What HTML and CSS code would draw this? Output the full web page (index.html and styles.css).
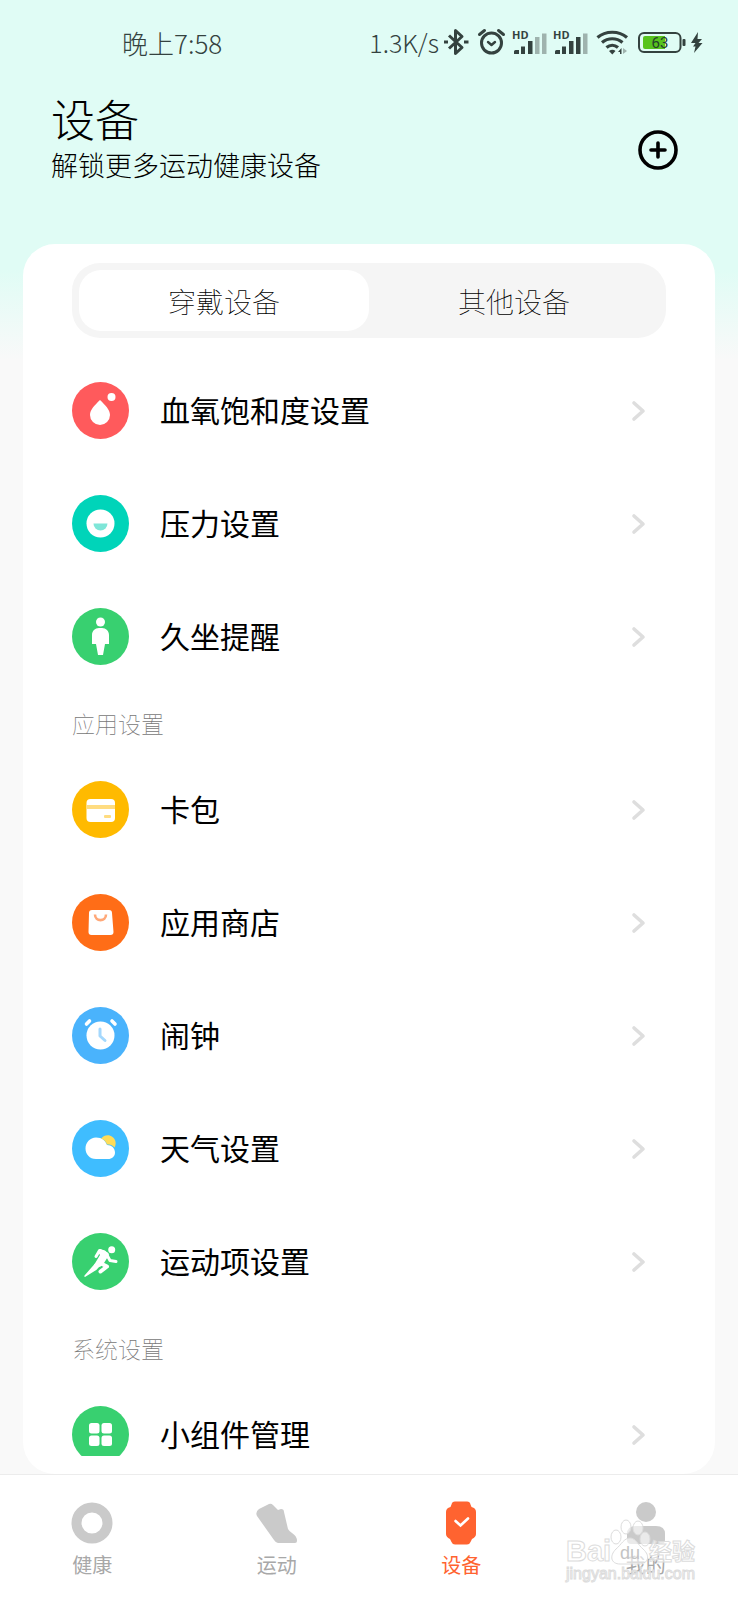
FILE: index.html
```html
<!DOCTYPE html>
<html lang="zh-CN">
<head>
    <meta charset="UTF-8">
    <meta name="viewport" content="width=device-width, initial-scale=1.0">
    <title>设备</title>
    <link rel="stylesheet" href="styles.css">
</head>
<body>

<svg class="defs" aria-hidden="true">
    <symbol id="chevron" viewBox="0 0 16 24">
        <path d="M4 4l9 8-9 8" fill="none" stroke="#dedede" stroke-width="3.600" stroke-linecap="round" stroke-linejoin="round"/>
    </symbol>
    <symbol id="signal" viewBox="0 0 41 28">
        <path d="M6 26v-2.500a1.500 1.500 0 0 1 1.500-1.500H11v4zM13 18.500h4V26h-4zM20 13h4.500v13H20z"/>
    </symbol>
</svg>

<div class="app">

    <!-- Status bar -->
    <div class="status-bar">
        <span class="clock">晚上7:58</span>
        <div class="status-icons">
            <span class="speed">1.3K/s</span>
            <svg width="30" height="28" viewBox="0 0 30 28" fill="none" stroke="#34423f" stroke-width="3" stroke-linejoin="round">
                <path d="M7 7.500l13 12-6.500 6V2.500l6.500 6L7 20.500"/>
                <path d="M2 14h4M22 14h4.500" stroke-width="3.200"/>
            </svg>
            <svg width="36" height="28" viewBox="0 0 36 28" fill="none" stroke="#34423f" stroke-width="3" stroke-linecap="round">
                <circle cx="19.500" cy="15" r="10"/>
                <path d="M16 14l3.500 3 3.500-3" stroke-width="2.400" stroke-linejoin="round"/>
                <path d="M7.500 6.500l5-4M31.500 6.500l-5-4"/>
            </svg>
            <svg width="41" height="28" viewBox="0 0 41 28" fill="#34423f">
                <text x="4" y="11" class="hd">HD</text>
                <use href="#signal"/>
                <path d="M27 9h4.500v17H27zM34 5.500h4.500V26H34z" fill="#9fb3ae"/>
            </svg>
            <svg width="41" height="28" viewBox="0 0 41 28" fill="#34423f">
                <text x="4" y="11" class="hd">HD</text>
                <use href="#signal"/>
                <path d="M27 9h4.500v17H27z"/>
                <path d="M34 5.500h4.500V26H34z" fill="#9fb3ae"/>
            </svg>
            <svg width="44" height="28" viewBox="0 0 44 28" fill="none" stroke="#34423f" stroke-width="3.200">
                <path d="M7.500 9.500c8-7 21.500-7 29.500 0"/>
                <path d="M12 14.500c6-5 14.500-5 20.500 0"/>
                <path d="M16.500 19.500c3.500-3 8-3 11.500 0"/>
                <path d="M19 23q3.500-2.500 6.500 0L22.300 26.500z" fill="#34423f" stroke="none"/>
                <path d="M28 24l3.500-4v6h-1.500v-2z" fill="#34423f" stroke="none"/>
                <path d="M33 20v6l4-3z" fill="#9fb3ae" stroke="none"/>
            </svg>
            <svg width="54" height="28" viewBox="0 0 54 28">
                <rect x="5" y="5" width="41.500" height="19" rx="5" fill="none" stroke="#34423f" stroke-width="2"/>
                <path d="M11 8h20v13H11a2 2 0 0 1-2-2v-9a2 2 0 0 1 2-2z" fill="#57c31e"/>
                <rect x="48.500" y="11" width="3" height="7" rx="1" fill="#34423f"/>
                <text x="26" y="20" class="battery">63</text>
            </svg>
            <svg width="17" height="28" viewBox="0 0 17 28" fill="#34423f">
                <path d="M10 4L3 15h4.500L5 18.500h2.500L6 25l8.500-10H10.500L14 11h-4.500z"/>
            </svg>
        </div>
    </div>

    <!-- Header -->
    <header class="header">
        <div>
            <h1>设备</h1>
            <p>解锁更多运动健康设备</p>
        </div>
        <button class="add-btn" aria-label="添加设备">
            <svg width="40" height="40" viewBox="0 0 40 40" fill="none" stroke="#000" stroke-linecap="round">
                <circle cx="20" cy="20" r="18" stroke-width="3.600"/>
                <path d="M13 20h14M20 13v14" stroke-width="3.600"/>
            </svg>
        </button>
    </header>

    <!-- Device settings -->
    <main class="card">
        <div class="tabs">
            <button class="tab active">穿戴设备</button>
            <button class="tab">其他设备</button>
        </div>

        <div class="list">
            <a class="row" href="#">
                <svg class="icon" viewBox="0 0 57 57">
                    <circle cx="28.500" cy="28.500" r="28.500" fill="#ff5a5c"/>
                    <path d="M28 18c5 5 10 9.500 10 15a10 10 0 0 1-20 0c0-5.500 5-10 10-15z" fill="#fff"/>
                    <circle cx="39.500" cy="15" r="4" fill="#fff"/>
                </svg>
                <span>血氧饱和度设置</span>
                <svg class="arrow"><use href="#chevron"/></svg>
            </a>
            <a class="row" href="#">
                <svg class="icon" viewBox="0 0 57 57">
                    <circle cx="28.500" cy="28.500" r="28.500" fill="#00d4b9"/>
                    <circle cx="28.500" cy="28.500" r="14" fill="#fff"/>
                    <path d="M21.500 28.500h14a7 7 0 0 1-14 0z" fill="#7fe6d8"/>
                </svg>
                <span>压力设置</span>
                <svg class="arrow"><use href="#chevron"/></svg>
            </a>
            <a class="row" href="#">
                <svg class="icon" viewBox="0 0 57 57">
                    <circle cx="28.500" cy="28.500" r="28.500" fill="#38d070"/>
                    <circle cx="28.500" cy="14" r="4.500" fill="#fff"/>
                    <path d="M27 20h3c4 0 7 3 7 7v9h-4l-2 11h-5l-2-11h-4v-9c0-4 3-7 7-7z" fill="#fff"/>
                </svg>
                <span>久坐提醒</span>
                <svg class="arrow"><use href="#chevron"/></svg>
            </a>

            <h2>应用设置</h2>
            <a class="row" href="#">
                <svg class="icon" viewBox="0 0 57 57">
                    <circle cx="28.500" cy="28.500" r="28.500" fill="#ffba00"/>
                    <rect x="14.500" y="18" width="28.500" height="23" rx="4" fill="#fff"/>
                    <path d="M14.500 24H43v4H14.500z" fill="#ffdc80"/>
                    <rect x="32" y="34" width="7" height="3" rx="1" fill="#ffdc80"/>
                </svg>
                <span>卡包</span>
                <svg class="arrow"><use href="#chevron"/></svg>
            </a>
            <a class="row" href="#">
                <svg class="icon" viewBox="0 0 57 57">
                    <circle cx="28.500" cy="28.500" r="28.500" fill="#ff6d17"/>
                    <path d="M20 16h17q3 0 3 3l1.500 19q0 3-3 3h-19q-3 0-3-3L17 19q0-3 3-3z" fill="#fff"/>
                    <path d="M23 20.500c0 7.500 11 7.500 11 0" fill="none" stroke="#ffa878" stroke-width="2.600"/>
                </svg>
                <span>应用商店</span>
                <svg class="arrow"><use href="#chevron"/></svg>
            </a>
            <a class="row" href="#">
                <svg class="icon" viewBox="0 0 57 57">
                    <circle cx="28.500" cy="28.500" r="28.500" fill="#4ab3fc"/>
                    <circle cx="28.500" cy="28.500" r="14" fill="#fff"/>
                    <path d="M28 22v7l5 4.500" fill="none" stroke="#a4d8fd" stroke-width="3" stroke-linecap="round" stroke-linejoin="round"/>
                    <path d="M14.500 17l3-3M43 17l-3-3" stroke="#fff" stroke-width="3.600" stroke-linecap="round"/>
                </svg>
                <span>闹钟</span>
                <svg class="arrow"><use href="#chevron"/></svg>
            </a>
            <a class="row" href="#">
                <svg class="icon" viewBox="0 0 57 57">
                    <circle cx="28.500" cy="28.500" r="28.500" fill="#3fbdff"/>
                    <path d="M24 17.500c6 0 9.500 3 11 7.500 4.500 0 8 3 8 7.500 0 4-3 6.500-7 6.500H24c-6.500 0-10.500-5-10.500-10.500 0-6 4.500-11 10.500-11z" fill="#fff"/>
                    <path d="M29 18.500c3-3.500 8-4.500 11.500-1.500 3.500 2.500 4 7 2 10.500-2-2.500-4.500-3-7.500-3-1-3-3-5-6-6z" fill="#ffdc57"/>
                </svg>
                <span>天气设置</span>
                <svg class="arrow"><use href="#chevron"/></svg>
            </a>
            <a class="row" href="#">
                <svg class="icon" viewBox="0 0 57 57">
                    <circle cx="28.500" cy="28.500" r="28.500" fill="#38d070"/>
                    <circle cx="39.700" cy="16.800" r="3.500" fill="#fff"/>
                    <path d="M28 16l7 3q2 1 2 3l-5 8-4 4-6-2 6-10-2-3z" fill="#fff"/>
                    <g fill="none" stroke="#fff" stroke-width="3" stroke-linecap="round" stroke-linejoin="round">
                        <path d="M24 23.500l3.500-6 5 1.500"/>
                        <path d="M35.500 23l2.500 4.500 6 1"/>
                        <path d="M29 30.500l6 3-6.500 5" stroke-width="4"/>
                    </g>
                    <path d="M23 30.500l5 2.500q-3 4-7 6l-8 5q-1 0-.5-1.500z" fill="#fff"/>
                </svg>
                <span>运动项设置</span>
                <svg class="arrow"><use href="#chevron"/></svg>
            </a>

            <h2>系统设置</h2>
            <a class="row" href="#">
                <svg class="icon" viewBox="0 0 57 57">
                    <circle cx="28.500" cy="28.500" r="28.500" fill="#38d070"/>
                    <g fill="#fff">
                        <rect x="17" y="17" width="10.500" height="10.500" rx="2.500"/>
                        <rect x="29.500" y="17" width="10.500" height="10.500" rx="2.500"/>
                        <rect x="17" y="29.500" width="10.500" height="10.500" rx="2.500"/>
                        <rect x="29.500" y="29.500" width="10.500" height="10.500" rx="2.500"/>
                    </g>
                </svg>
                <span>小组件管理</span>
                <svg class="arrow"><use href="#chevron"/></svg>
            </a>
        </div>
    </main>

    <!-- Bottom navigation -->
    <nav class="nav">
        <a href="#">
            <svg width="44" height="44" viewBox="0 0 44 44"><circle cx="22" cy="22" r="15.500" fill="none" stroke="#cacaca" stroke-width="10"/></svg>
            <span>健康</span>
        </a>
        <a href="#">
            <svg width="44" height="44" viewBox="0 0 44 44"><path d="M4 8l10-5q2-1 4 1l5 5 3-1q3 0 3 3l4 17q1 2 4 4 5 3 5 8 0 2-2 2H23q-2 0-4-3L2 15q-2-4 2-7z" fill="#cacaca"/></svg>
            <span>运动</span>
        </a>
        <a href="#" class="current">
            <svg width="44" height="44" viewBox="0 0 44 44">
                <path d="M16 .5h12q3 0 3.500 3l1 2.500Q37 7 37 11v22q0 3-4 5l-1.500 3q-1 2.500-3.500 2.500H16q-2.500 0-3.500-2.500L11 38q-4-2-4-5V11q0-4 4.500-5l1-2.500Q13 .5 16 .5z" fill="#ff6330"/>
                <path d="M16.500 20l5 4.500 7.500-7" fill="none" stroke="#fff" stroke-width="2.600" stroke-linecap="round"/>
            </svg>
            <span>设备</span>
        </a>
        <a href="#">
            <svg width="44" height="44" viewBox="0 0 44 44" fill="#cacaca">
                <circle cx="22" cy="11" r="10"/>
                <path d="M12 25h20q9 0 9 8v6q0 4-4 4H7q-4 0-4-4v-6q0-8 9-8z"/>
            </svg>
            <span>我的</span>
        </a>
        <svg class="watermark" width="140" height="70" viewBox="0 0 140 70" aria-hidden="true">
            <g fill="#fff" fill-opacity=".6" stroke="#dcdcdc">
                <ellipse cx="54" cy="22" rx="5" ry="7"/>
                <ellipse cx="64" cy="12" rx="5" ry="7"/>
                <ellipse cx="76" cy="13" rx="5" ry="7"/>
                <ellipse cx="83" cy="24" rx="5" ry="7"/>
                <path d="M68 23c6 0 8 7 13 11 8 7 5 15-4 15H58c-9 0-11-8-4-15 5-4 8-11 14-11z"/>
                <text x="4" y="46" class="wm-logo">Bai</text>
                <text x="87" y="45" class="wm-cn">经验</text>
                <text x="4" y="64" class="wm-url">jingyan.baidu.com</text>
            </g>
            <text x="58" y="44" class="wm-du">du</text>
        </svg>
    </nav>

</div>

</body>
</html>
```
FILE: styles.css
```css
* {
    box-sizing: border-box;
}

body {
    margin: 0;
    background-color: #f9f9f9;
    font-family: "Noto Sans CJK SC", sans-serif;
    color: #000;
}

button {
    border: none;
    padding: 0;
    background: none;
    font-family: inherit;
    color: inherit;
    cursor: pointer;
}

a {
    color: inherit;
    text-decoration: none;
}

h1, h2, p {
    margin: 0;
}

.defs {
    position: absolute;
    width: 0;
    height: 0;
}

.app {
    display: flex;
    flex-direction: column;
    height: 100vh;
    background: linear-gradient(#e0fcf5 270px, #f9f9f9 360px);
}

/* Status bar */
.status-bar {
    display: flex;
    justify-content: space-between;
    align-items: center;
    height: 84px;
    flex-shrink: 0;
    padding: 0 33px 0 122px;
    font-size: 25px;
    font-weight: 300;
    color: #34423f;
}

.clock {
    font-size: 26px;
}

.status-icons {
    display: flex;
    align-items: center;
}

.speed {
    margin-right: 3px;
}

.hd {
    font: bold 11px "Open Sans", sans-serif;
}

.battery {
    font: 15px Roboto, sans-serif;
    text-anchor: middle;
    fill: #24402a;
}

/* Header */
.header {
    display: flex;
    justify-content: space-between;
    align-items: flex-end;
    flex-shrink: 0;
    padding: 4px 60px 60px 51px;
}

.header h1 {
    font-size: 44px;
    font-weight: 300;
    line-height: 60px;
}

.header p {
    padding-bottom: 2px;
    font-size: 27px;
    font-weight: 300;
    line-height: 34px;
}

.add-btn {
    display: flex;
    align-items: center;
    height: 68px;
}

/* Card */
.card {
    display: flex;
    flex-direction: column;
    flex: 1;
    min-height: 0;
    margin: 0 23px;
    padding: 19px 49px 18px;
    background-color: #fff;
    border-radius: 32px;
}

.tabs {
    display: grid;
    grid-template-columns: 1fr 1fr;
    flex-shrink: 0;
    height: 75px;
    padding: 7px;
    margin-bottom: 16px;
    background-color: #f5f5f5;
    border-radius: 28px;
}

.tab {
    font-size: 28px;
    font-weight: 100;
    border-radius: 22px;
}

.tab.active {
    background-color: #fff;
}

.list {
    flex: 1;
    min-height: 0;
    overflow-y: auto;
    scrollbar-width: none;
}

.list h2 {
    font-size: 23px;
    font-weight: 100;
    line-height: 60px;
    color: #777;
}

.row {
    display: flex;
    align-items: center;
    height: 113px;
    padding-right: 20px;
    font-size: 30px;
}

.row span {
    padding-bottom: 4px;
}

.row .icon {
    width: 57px;
    height: 57px;
    margin-right: 31px;
}

.row .arrow {
    width: 16px;
    height: 24px;
    margin-left: auto;
}

/* Bottom navigation */
.nav {
    position: relative;
    display: grid;
    grid-template-columns: repeat(4, 1fr);
    flex-shrink: 0;
    height: 126px;
    padding-top: 26px;
    background-color: #fff;
    border-top: 1px solid #ececec;
}

.nav a {
    display: flex;
    flex-direction: column;
    align-items: center;
    gap: 5px;
    font-size: 20px;
    line-height: 30px;
    color: #a8a8a8;
}

.nav .current {
    color: #ff6330;
}

.watermark {
    position: absolute;
    right: 36px;
    top: 40px;
}

.wm-logo {
    font: bold 29px "Liberation Sans", sans-serif;
}

.wm-cn {
    font: bold 23px "Noto Sans CJK SC", sans-serif;
}

.wm-url {
    font: 16px "Liberation Sans", sans-serif;
}

.wm-du {
    font: 18px "Liberation Sans", sans-serif;
    fill: #c4c4c4;
}
```
